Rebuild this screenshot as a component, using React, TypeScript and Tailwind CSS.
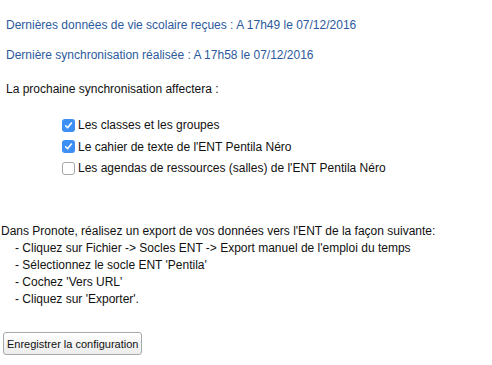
import React, { useState } from "react";

type SyncOption = {
  id: string;
  label: string;
  checked: boolean;
};

const Checkbox: React.FC<{ checked: boolean; onToggle: () => void }> = ({ checked, onToggle }) => (
  <button
    type="button"
    onClick={onToggle}
    className={
      checked
        ? "w-[13px] h-[13px] rounded-[3px] bg-[#3d8ff6] flex items-center justify-center"
        : "w-[13px] h-[13px] rounded-[3px] bg-white border border-[#a8a8a8]"
    }
  >
    {checked && (
      <svg width="9" height="9" viewBox="0 0 9 9" fill="none">
        <path d="M1.6 4.8 L3.6 6.8 L7.4 2" stroke="white" strokeWidth="1.6" strokeLinecap="round" strokeLinejoin="round" />
      </svg>
    )}
  </button>
);

const App: React.FC = () => {
  const [options, setOptions] = useState<SyncOption[]>([
    { id: "classes", label: "Les classes et les groupes", checked: true },
    { id: "cahier", label: "Le cahier de texte de l'ENT Pentila Néro", checked: true },
    { id: "agendas", label: "Les agendas de ressources (salles) de l'ENT Pentila Néro", checked: false },
  ]);

  const toggle = (id: string) =>
    setOptions((prev) => prev.map((o) => (o.id === id ? { ...o, checked: !o.checked } : o)));

  return (
    <div className="w-[492px] h-[365px] bg-white font-['Liberation_Sans',Arial,sans-serif] text-[12px] leading-[18px] text-[#111]">
      {/* Status */}
      <div className="pl-[6px] pt-[16px] text-[#2c5a9c]">
        <p>Dernières données de vie scolaire reçues : A 17h49 le 07/12/2016</p>
        <p className="mt-[12px]">Dernière synchronisation réalisée : A 17h58 le 07/12/2016</p>
      </div>

      {/* Next sync */}
      <p className="pl-[6px] mt-[16px]">La prochaine synchronisation affectera :</p>

      <div className="mt-[18px] pl-[62px] flex flex-col gap-[3.5px]">
        {options.map((o) => (
          <label key={o.id} className="flex items-center gap-[3px] cursor-pointer">
            <Checkbox checked={o.checked} onToggle={() => toggle(o.id)} />
            <span>{o.label}</span>
          </label>
        ))}
      </div>

      {/* Instructions */}
      <div className="mt-[46px] pl-[1px] leading-[17px]">
        <p>Dans Pronote, réalisez un export de vos données vers l'ENT de la façon suivante:</p>
        <ul className="pl-[14px]">
          <li>- Cliquez sur Fichier -&gt; Socles ENT -&gt; Export manuel de l'emploi du temps</li>
          <li>- Sélectionnez le socle ENT 'Pentila'</li>
          <li>- Cochez 'Vers URL'</li>
          <li>- Cliquez sur 'Exporter'.</li>
        </ul>
      </div>

      <div className="pl-[3px] mt-[24px]">
        <button
          type="button"
          className="h-[23px] px-[3px] rounded-[3px] border border-[#a9a9a9] bg-gradient-to-b from-white to-[#ececec] text-[11px] text-[#111] leading-[18px]"
        >
          Enregistrer la configuration
        </button>
      </div>
    </div>
  );
};

export default App;
